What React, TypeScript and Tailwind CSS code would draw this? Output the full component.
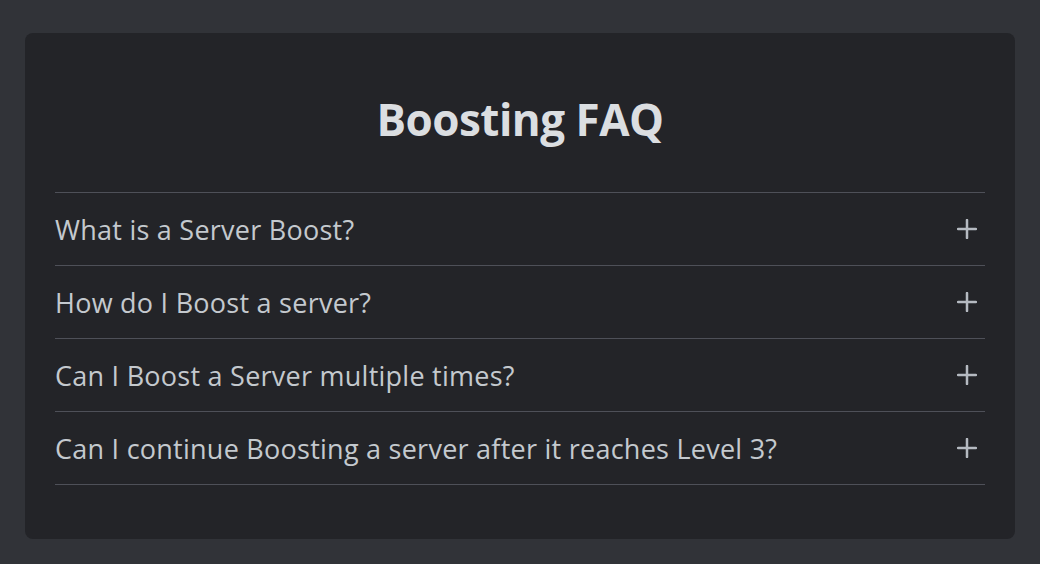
import { useState } from 'react';

const questions = [
  'What is a Server Boost?',
  'How do I Boost a server?',
  'Can I Boost a Server multiple times?',
  'Can I continue Boosting a server after it reaches Level 3?',
];

const PlusIcon = () => (
  <svg width="20" height="20" viewBox="0 0 20 20" className="mr-2 shrink-0">
    <path d="M10 1v18M1 10h18" stroke="#b5bac1" strokeWidth="2.5" strokeLinecap="round" />
  </svg>
);

const App = () => {
  const [open, setOpen] = useState<number | null>(null);

  return (
    <div
      className="min-h-screen bg-[#313338] px-[25px] pt-[33px] pb-[26px]"
      style={{ fontFamily: '"Open Sans", "Noto Sans", sans-serif' }}
    >
      <div className="rounded-lg bg-[#232428] px-[30px] pb-[54px]">
        <div className="flex h-[159px] items-center justify-center pt-[12px]">
          <h2 className="text-[44px] font-bold leading-none tracking-[-0.5px] text-[#dbdee1]">Boosting FAQ</h2>
        </div>
        <div className="border-t border-[#4e5058]">
          {questions.map((q, i) => (
            <button
              key={q}
              onClick={() => setOpen(open === i ? null : i)}
              className="flex h-[73px] w-full items-center justify-between border-b border-[#4e5058] text-left"
            >
              <span className="text-[27px] leading-none tracking-[0.25px] text-[#c4c9ce]">{q}</span>
              <PlusIcon />
            </button>
          ))}
        </div>
      </div>
    </div>
  );
};

export default App;
